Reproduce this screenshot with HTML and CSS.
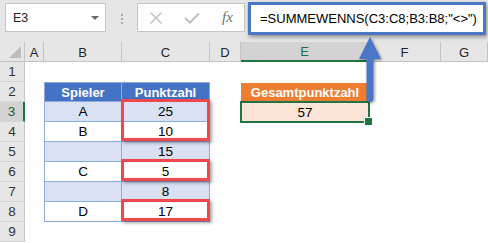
FILE: index.html
```html
<!DOCTYPE html>
<html lang="de">
<head>
<meta charset="utf-8">
<title>SUMMEWENNS</title>
<link rel="stylesheet" href="styles.css">
</head>
<body>
<div class="app">
  <div class="toolbar">
    <div class="namebox"><span class="ref">E3</span><span class="caret"></span></div>
    <div class="grip"><i></i><i></i><i></i></div>
    <div class="fxbox">
      <svg class="ico-x" width="14" height="14" viewBox="0 0 14 14"><path d="M1.5 1.5 L12.5 12.5 M12.5 1.5 L1.5 12.5" stroke="#bdbdbd" stroke-width="1.3" fill="none"/></svg>
      <svg class="ico-ok" width="16" height="12" viewBox="0 0 16 12"><path d="M1 6 L6 10.5 L15 1.5" stroke="#bdbdbd" stroke-width="2" fill="none"/></svg>
      <span class="fx">fx</span>
    </div>
    <div class="formula">=SUMMEWENNS(C3:C8;B3:B8;"&lt;&gt;")</div>
  </div>

  <div class="sheet">
    <!-- header row -->
    <div class="corner"><span class="tri"></span></div>
    <div class="h">A</div>
    <div class="h">B</div>
    <div class="h">C</div>
    <div class="h">D</div>
    <div class="h sel">E</div>
    <div class="h">F</div>
    <div class="h">G</div>
    <!-- row 1 -->
    <div class="rh">1</div>
    <div class="c"></div><div class="c"></div><div class="c"></div><div class="c"></div><div class="c"></div><div class="c"></div><div class="c"></div>
    <!-- row 2 -->
    <div class="rh">2</div>
    <div class="c"></div>
    <div class="t th first">Spieler</div>
    <div class="t th">Punktzahl</div>
    <div class="c"></div>
    <div class="c oh">Gesamtpunktzahl</div>
    <div class="c"></div><div class="c"></div>
    <!-- row 3 -->
    <div class="rh sel">3</div>
    <div class="c"></div>
    <div class="t band first">A</div>
    <div class="t band hl hl2">25</div>
    <div class="c"></div>
    <div class="c ov active">57</div>
    <div class="c"></div><div class="c"></div>
    <!-- row 4 -->
    <div class="rh">4</div>
    <div class="c"></div>
    <div class="t first">B</div>
    <div class="t">10</div>
    <div class="c"></div><div class="c"></div><div class="c"></div><div class="c"></div>
    <!-- row 5 -->
    <div class="rh">5</div>
    <div class="c"></div>
    <div class="t band first"></div>
    <div class="t band">15</div>
    <div class="c"></div><div class="c"></div><div class="c"></div><div class="c"></div>
    <!-- row 6 -->
    <div class="rh">6</div>
    <div class="c"></div>
    <div class="t first">C</div>
    <div class="t hl">5</div>
    <div class="c"></div><div class="c"></div><div class="c"></div><div class="c"></div>
    <!-- row 7 -->
    <div class="rh">7</div>
    <div class="c"></div>
    <div class="t band first"></div>
    <div class="t band">8</div>
    <div class="c"></div><div class="c"></div><div class="c"></div><div class="c"></div>
    <!-- row 8 -->
    <div class="rh">8</div>
    <div class="c"></div>
    <div class="t first">D</div>
    <div class="t hl">17</div>
    <div class="c"></div><div class="c"></div><div class="c"></div><div class="c"></div>
    <!-- row 9 -->
    <div class="rh">9</div>
    <div class="c"></div><div class="c"></div><div class="c"></div><div class="c"></div><div class="c"></div><div class="c"></div><div class="c"></div>
  </div>

  <svg class="arrow" width="34" height="76" viewBox="0 0 34 76">
    <defs>
      <filter id="sh" x="-50%" y="-50%" width="200%" height="200%">
        <feDropShadow dx="1" dy="1" stdDeviation="1.6" flood-color="#000" flood-opacity="0.45"/>
      </filter>
    </defs>
    <path d="M15 4 L26 26 L18.5 26 L18.5 65 Q18.5 69 15 69 Q11.5 69 11.5 65 L11.5 26 L4 26 Z" fill="#4a76c6" filter="url(#sh)"/>
  </svg>
</div>
</body>
</html>
```

FILE: styles.css
```css
* { box-sizing: border-box; }
html, body { margin: 0; padding: 0; }
body {
  width: 488px;
  height: 243px;
  overflow: hidden;
  background: #fff;
  font-family: "Liberation Sans", Arial, sans-serif;
  font-size: 13px;
  color: #000;
}
.app { position: relative; width: 488px; height: 243px; }

/* ---------- toolbar ---------- */
.toolbar {
  height: 42px;
  background: #e6e6e6;
  display: flex;
  align-items: flex-start;
}
.namebox {
  margin: 3px 0 0 5px;
  width: 101px;
  height: 29px;
  background: #fff;
  border: 1px solid #c6c6c6;
  display: flex;
  align-items: center;
  justify-content: space-between;
  padding: 0 6px 0 7px;
  font-size: 12.5px;
  color: #222;
}
.caret {
  width: 0; height: 0;
  border-left: 4px solid transparent;
  border-right: 4px solid transparent;
  border-top: 4px solid #6a6a6a;
}
.grip {
  margin: 14px 0 0 15px;
  width: 2px;
  display: flex;
  flex-direction: column;
  gap: 2px;
}
.grip i { display: block; width: 2px; height: 2px; background: #a8a8a8; }
.fxbox {
  margin: 3px 0 0 14px;
  width: 108px;
  height: 29px;
  background: #fff;
  border: 1px solid #c6c6c6;
  display: flex;
  align-items: center;
  padding-left: 11px;
}
.ico-x { margin-right: 21px; }
.ico-ok { margin-right: 22px; }
.fx {
  font-family: "Liberation Serif", "Times New Roman", serif;
  font-style: italic;
  font-size: 15px;
  color: #707070;
}
.formula {
  margin: 2px 0 0 3px;
  width: 238px;
  height: 33px;
  background: #fff;
  border: 3px solid #4a76c6;
  box-shadow: 1px 2px 4px rgba(0,0,0,0.4);
  padding-left: 9px;
  display: flex;
  align-items: center;
  font-size: 13px;
  white-space: nowrap;
}

/* ---------- sheet ---------- */
.sheet {
  display: grid;
  grid-template-columns: 25px 19px 78px 88px 31px 128px 72px 1fr;
  grid-template-rows: repeat(10, 20px);
}
.sheet > div {
  display: flex;
  align-items: center;
  justify-content: center;
  white-space: nowrap;
}
.corner {
  background: #e6e6e6;
  border-right: 1px solid #c4c4c4;
  border-bottom: 1px solid #c4c4c4;
  position: relative;
}
.tri {
  position: absolute;
  right: 3px;
  bottom: 3px;
  width: 0; height: 0;
  border-left: 12px solid transparent;
  border-bottom: 12px solid #bdbdbd;
}
.h {
  background: #e6e6e6;
  border-right: 1px solid #c4c4c4;
  border-bottom: 1px solid #c4c4c4;
  color: #262626;
  font-size: 13px;
  padding-top: 1px;
}
.h.sel {
  background: #d3d3d3;
  color: #1f6e43;
  border-bottom: 2px solid #217346;
}
.rh {
  background: #e6e6e6;
  border-right: 1px solid #c4c4c4;
  border-bottom: 1px solid #d6d6d6;
  color: #333;
  font-size: 13.5px;
}
.rh.sel {
  background: #d3d3d3;
  color: #1f5e3a;
  border-right: 2px solid #217346;
}
.t {
  border-right: 1px solid #8ea9db;
  border-bottom: 1px solid #8ea9db;
  font-size: 13.5px;
}
.t.first { border-left: 1px solid #8ea9db; }
.th {
  background: #4472c4;
  color: #fff;
  font-weight: bold;
  font-size: 13px;
  border-top: 1px solid #8ea9db;
}
.band { background: #d9e1f2; }
.oh {
  background: #ed7d31;
  color: #fff;
  font-weight: bold;
  border-top: 1px solid #fff;
  border-bottom: 1px solid #fff;
}
.ov { background: #fce4d6; font-size: 13.5px; }
.active { position: relative; }
.active::after {
  content: "";
  position: absolute;
  left: -1px; right: -1px; top: -1px; bottom: -1px;
  border: 2px solid #217346;
}
.active::before {
  content: "";
  position: absolute;
  right: -4px; bottom: -4px;
  width: 7px; height: 7px;
  background: #217346;
  border: 1px solid #fff;
  z-index: 2;
}
.hl { position: relative; }
.hl::after {
  content: "";
  position: absolute;
  left: -1px; right: -1px; top: -3px; bottom: 0;
  border: 3.5px solid #f0474c;
  box-shadow: 2px 2px 3px rgba(0,0,0,0.35);
  z-index: 2;
}
.hl2::after { bottom: -20px; }

/* ---------- annotation arrow ---------- */
.arrow {
  position: absolute;
  left: 355px;
  top: 33px;
}
```
